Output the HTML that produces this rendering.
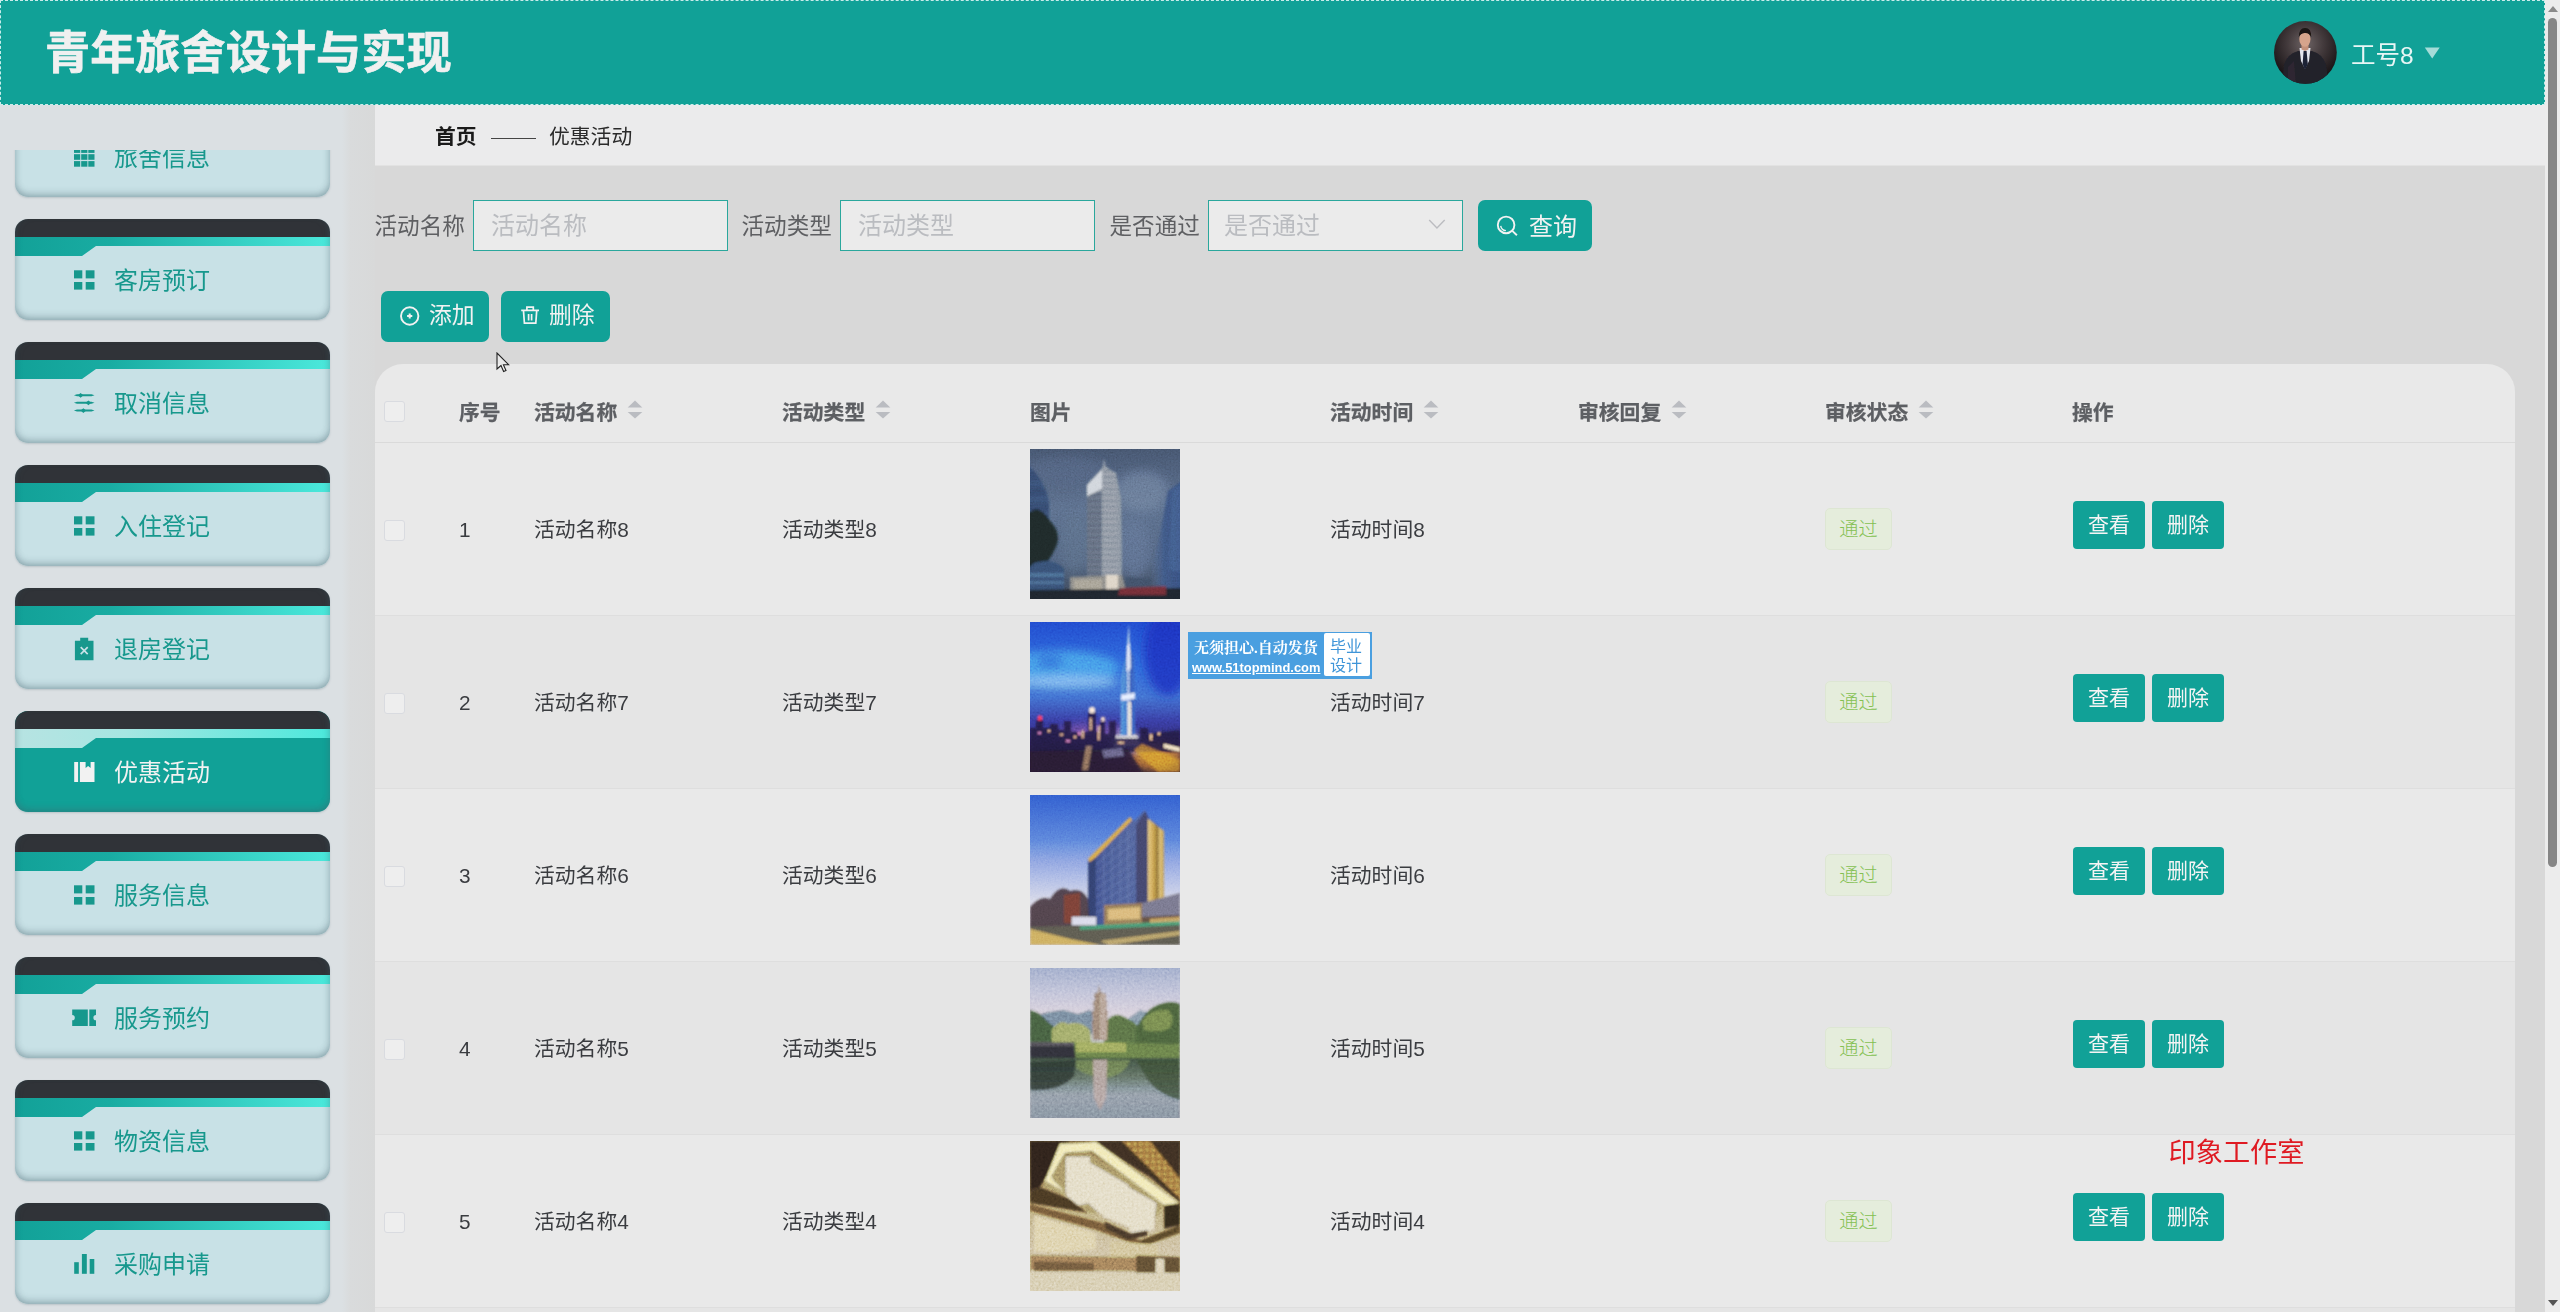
<!DOCTYPE html>
<html lang="zh-CN"><head><meta charset="utf-8"><title>青年旅舍设计与实现</title>
<style>
*{box-sizing:border-box;margin:0;padding:0}
html,body{width:2560px;height:1312px;overflow:hidden}
body{position:relative;background:#d8d8d8;font-family:"Liberation Sans","Noto Sans CJK SC",sans-serif;color:#333;-webkit-font-smoothing:antialiased}
.abs{position:absolute}
.t{position:absolute;white-space:nowrap;line-height:1}
#side{position:absolute;left:0;top:104px;width:375px;height:1208px;background:linear-gradient(90deg,#dbe0e3 0,#dbe0e3 342px,#d9dbdc 350px,#d8d9d9 375px)}
#menu{position:absolute;left:0;top:46px;width:345px;height:1162px;overflow:hidden}
.mi{position:absolute;left:15px;width:315px;height:101px;border-radius:13px;overflow:hidden;background:#c8e1e6;box-shadow:0 1px 2px rgba(120,140,150,.35)}
.mi svg.top{position:absolute;left:0;top:0}
.mi .sh{position:absolute;left:0;top:0;right:0;bottom:0;border-radius:13px;box-shadow:inset 0 -5px 7px -2px rgba(70,100,110,.38),inset 5px 0 7px -4px rgba(70,100,110,.22),inset -5px 0 7px -4px rgba(70,100,110,.22)}
.mi .lb{position:absolute;left:99px;top:49px;font-size:24px;line-height:26px;color:#17988d;white-space:nowrap;font-weight:400}
.mi svg.ic{position:absolute;left:57px;top:49px}
.mi.on{background:#11a197}
.mi.on .lb{color:#f2f2f2}
#head{position:absolute;left:0;top:0;width:2545px;height:105px;background:#11a197}
#head .bd{position:absolute;left:0;top:0;right:0;bottom:0;border:1px dashed rgba(235,250,250,.85)}
#title{left:45px;top:31px;font-size:45.200px;font-weight:700;color:#f0f0f0;letter-spacing:0;-webkit-text-stroke:0.700px #f0f0f0}
#crumb{position:absolute;left:375px;top:105px;width:2170px;height:60px;background:#ebebec;box-shadow:0 1px 0 #e2e2e2}
.inp{position:absolute;top:200px;width:255px;height:51px;border:1px solid #2aa79c;background:#ebebeb}
.ph{position:absolute;font-size:24px;color:#babcc0;white-space:nowrap;line-height:1}
.lab{font-size:22.600px;color:#5e5f62}
.btn{position:absolute;background:#11a197;color:#f2f2f2;border-radius:7px;white-space:nowrap}
#tbl{position:absolute;left:375px;top:364px;width:2140px;height:948px;background:#e9e9e9;border-radius:28px 28px 0 0;overflow:hidden}
.row{position:absolute;left:0;width:2140px;height:173px;border-bottom:1px solid #dedede}
.th{position:absolute;top:39px;font-size:20.8px;font-weight:700;color:#5d5f63;-webkit-text-stroke:0.250px #5d5f63;white-space:nowrap;line-height:1}
.td{position:absolute;top:77px;font-size:20.8px;color:#3a3c40;white-space:nowrap;line-height:1}
.cb{position:absolute;left:9px;width:21px;height:21px;border:1px solid #d9dbe0;border-radius:3px;background:#eeeeee}
.img{position:absolute;left:655px;top:6px;width:150px;height:150px;overflow:hidden}
.tag{position:absolute;left:1450px;top:65px;width:67px;height:42px;border:1px solid #dde6d3;border-radius:5px;background:#e5eddc;color:#84c052;font-weight:300;font-size:19.2px;line-height:41px;text-align:center}
.ab{position:absolute;top:58px;width:72px;height:48px;border-radius:4px;background:#11a197;color:#f4f4f4;font-size:21px;line-height:47px;text-align:center}
#sb{position:absolute;left:2545px;top:0;width:15px;height:1312px;background:#ececec}
</style></head><body>
<div id="side"><div id="menu">
<div class="mi" style="top:-54px"><svg class="top" width="315" height="38" viewBox="0 0 315 38"><defs><linearGradient id="goff0" x1="0" x2="1" y1="0" y2="0"><stop offset="0" stop-color="#12a198"/><stop offset=".3" stop-color="#19aca2"/><stop offset="1" stop-color="#4be9dc"/></linearGradient></defs><rect x="0" y="0" width="315" height="18.5" fill="#303338"/><polygon points="0,18 315,18 315,27 81,27 67,37 0,37" fill="url(#goff0)"/></svg><div class="sh"></div><svg class="ic" width="24" height="24" viewBox="0 0 24 24" fill="#17988d"><rect x="2.0" y="2.3" width="6.2" height="5.6"/><rect x="9.2" y="2.3" width="6.2" height="5.6"/><rect x="16.3" y="2.3" width="6.2" height="5.6"/><rect x="2.0" y="9.2" width="6.2" height="5.6"/><rect x="9.2" y="9.2" width="6.2" height="5.6"/><rect x="16.3" y="9.2" width="6.2" height="5.6"/><rect x="2.0" y="16.1" width="6.2" height="5.6"/><rect x="9.2" y="16.1" width="6.2" height="5.6"/><rect x="16.3" y="16.1" width="6.2" height="5.6"/></svg><div class="lb">旅舍信息</div></div>
<div class="mi" style="top:69px"><svg class="top" width="315" height="38" viewBox="0 0 315 38"><defs><linearGradient id="goff1" x1="0" x2="1" y1="0" y2="0"><stop offset="0" stop-color="#12a198"/><stop offset=".3" stop-color="#19aca2"/><stop offset="1" stop-color="#4be9dc"/></linearGradient></defs><rect x="0" y="0" width="315" height="18.5" fill="#303338"/><polygon points="0,18 315,18 315,27 81,27 67,37 0,37" fill="url(#goff1)"/></svg><div class="sh"></div><svg class="ic" width="24" height="24" viewBox="0 0 24 24" fill="#17988d"><rect x="2" y="2.3" width="8.3" height="8.1"/><rect x="13.7" y="2.3" width="8.8" height="8.1"/><rect x="2" y="14" width="8.3" height="7.6"/><rect x="13.7" y="14" width="8.8" height="7.6"/></svg><div class="lb">客房预订</div></div>
<div class="mi" style="top:192px"><svg class="top" width="315" height="38" viewBox="0 0 315 38"><defs><linearGradient id="goff2" x1="0" x2="1" y1="0" y2="0"><stop offset="0" stop-color="#12a198"/><stop offset=".3" stop-color="#19aca2"/><stop offset="1" stop-color="#4be9dc"/></linearGradient></defs><rect x="0" y="0" width="315" height="18.5" fill="#303338"/><polygon points="0,18 315,18 315,27 81,27 67,37 0,37" fill="url(#goff2)"/></svg><div class="sh"></div><svg class="ic" width="24" height="24" viewBox="0 0 24 24" fill="#17988d"><path d="M1.9 4.3 L5 3.3 H19.5 L22.5 4.3 L19.5 5.3 H5z"/><path d="M5.8 4.3 l2.8 -2.4 l2.8 2.4 l-2.8 2.400z"/><path d="M1.9 11.8 L5 10.8 H19.5 L22.5 11.8 L19.5 12.8 H5z"/><path d="M13.6 11.8 l2.8 -2.4 l2.8 2.4 l-2.8 2.400z"/><path d="M1.9 19.6 L5 18.6 H19.5 L22.5 19.6 L19.5 20.6 H5z"/><path d="M8.6 19.6 l2.8 -2.4 l2.8 2.4 l-2.8 2.400z"/></svg><div class="lb">取消信息</div></div>
<div class="mi" style="top:315px"><svg class="top" width="315" height="38" viewBox="0 0 315 38"><defs><linearGradient id="goff3" x1="0" x2="1" y1="0" y2="0"><stop offset="0" stop-color="#12a198"/><stop offset=".3" stop-color="#19aca2"/><stop offset="1" stop-color="#4be9dc"/></linearGradient></defs><rect x="0" y="0" width="315" height="18.5" fill="#303338"/><polygon points="0,18 315,18 315,27 81,27 67,37 0,37" fill="url(#goff3)"/></svg><div class="sh"></div><svg class="ic" width="24" height="24" viewBox="0 0 24 24" fill="#17988d"><rect x="2" y="2.3" width="8.3" height="8.1"/><rect x="13.7" y="2.3" width="8.8" height="8.1"/><rect x="2" y="14" width="8.3" height="7.6"/><rect x="13.7" y="14" width="8.8" height="7.6"/></svg><div class="lb">入住登记</div></div>
<div class="mi" style="top:438px"><svg class="top" width="315" height="38" viewBox="0 0 315 38"><defs><linearGradient id="goff4" x1="0" x2="1" y1="0" y2="0"><stop offset="0" stop-color="#12a198"/><stop offset=".3" stop-color="#19aca2"/><stop offset="1" stop-color="#4be9dc"/></linearGradient></defs><rect x="0" y="0" width="315" height="18.5" fill="#303338"/><polygon points="0,18 315,18 315,27 81,27 67,37 0,37" fill="url(#goff4)"/></svg><div class="sh"></div><svg class="ic" width="24" height="24" viewBox="0 0 24 24" fill="#17988d"><path d="M2.9 3.800h18.600v19.400h-18.600z M8.2 0.800h8v4h-8z"/><path d="M8.7 10.200l7 7M15.7 10.200l-7 7" stroke="#c8e1e6" stroke-width="1.7" fill="none"/></svg><div class="lb">退房登记</div></div>
<div class="mi on" style="top:561px"><svg class="top" width="315" height="38" viewBox="0 0 315 38"><defs><linearGradient id="gon5" x1="0" x2="1" y1="0" y2="0"><stop offset="0" stop-color="#b7e3e2"/><stop offset=".35" stop-color="#a6e6e2"/><stop offset="1" stop-color="#4be9dc"/></linearGradient></defs><rect x="0" y="0" width="315" height="18.5" fill="#303338"/><polygon points="0,18 315,18 315,27 81,27 67,37 0,37" fill="url(#gon5)"/></svg><div class="sh"></div><svg class="ic" width="24" height="24" viewBox="0 0 24 24" fill="#f2f2f2"><rect x="2.2" y="2" width="3.9" height="20"/><path d="M7.9 2H13.600V8L16.1 6.100L18.6 8V2H22.500V22H7.900z"/></svg><div class="lb">优惠活动</div></div>
<div class="mi" style="top:684px"><svg class="top" width="315" height="38" viewBox="0 0 315 38"><defs><linearGradient id="goff6" x1="0" x2="1" y1="0" y2="0"><stop offset="0" stop-color="#12a198"/><stop offset=".3" stop-color="#19aca2"/><stop offset="1" stop-color="#4be9dc"/></linearGradient></defs><rect x="0" y="0" width="315" height="18.5" fill="#303338"/><polygon points="0,18 315,18 315,27 81,27 67,37 0,37" fill="url(#goff6)"/></svg><div class="sh"></div><svg class="ic" width="24" height="24" viewBox="0 0 24 24" fill="#17988d"><rect x="2" y="2.3" width="8.3" height="8.1"/><rect x="13.7" y="2.3" width="8.8" height="8.1"/><rect x="2" y="14" width="8.3" height="7.6"/><rect x="13.7" y="14" width="8.8" height="7.6"/></svg><div class="lb">服务信息</div></div>
<div class="mi" style="top:807px"><svg class="top" width="315" height="38" viewBox="0 0 315 38"><defs><linearGradient id="goff7" x1="0" x2="1" y1="0" y2="0"><stop offset="0" stop-color="#12a198"/><stop offset=".3" stop-color="#19aca2"/><stop offset="1" stop-color="#4be9dc"/></linearGradient></defs><rect x="0" y="0" width="315" height="18.5" fill="#303338"/><polygon points="0,18 315,18 315,27 81,27 67,37 0,37" fill="url(#goff7)"/></svg><div class="sh"></div><svg class="ic" width="24" height="24" viewBox="0 0 24 24" fill="#17988d"><path fill-rule="evenodd" d="M0.2 3.400H24V9.100a2.6 2.6 0 0 0 0 5.200V20H0.200V14.300a2.6 2.6 0 0 0 0 -5.200z M15.8 3.400h1.500v16.600h-1.500z"/></svg><div class="lb">服务预约</div></div>
<div class="mi" style="top:930px"><svg class="top" width="315" height="38" viewBox="0 0 315 38"><defs><linearGradient id="goff8" x1="0" x2="1" y1="0" y2="0"><stop offset="0" stop-color="#12a198"/><stop offset=".3" stop-color="#19aca2"/><stop offset="1" stop-color="#4be9dc"/></linearGradient></defs><rect x="0" y="0" width="315" height="18.5" fill="#303338"/><polygon points="0,18 315,18 315,27 81,27 67,37 0,37" fill="url(#goff8)"/></svg><div class="sh"></div><svg class="ic" width="24" height="24" viewBox="0 0 24 24" fill="#17988d"><rect x="2" y="2.3" width="8.3" height="8.1"/><rect x="13.7" y="2.3" width="8.8" height="8.1"/><rect x="2" y="14" width="8.3" height="7.6"/><rect x="13.7" y="14" width="8.8" height="7.6"/></svg><div class="lb">物资信息</div></div>
<div class="mi" style="top:1053px"><svg class="top" width="315" height="38" viewBox="0 0 315 38"><defs><linearGradient id="goff9" x1="0" x2="1" y1="0" y2="0"><stop offset="0" stop-color="#12a198"/><stop offset=".3" stop-color="#19aca2"/><stop offset="1" stop-color="#4be9dc"/></linearGradient></defs><rect x="0" y="0" width="315" height="18.5" fill="#303338"/><polygon points="0,18 315,18 315,27 81,27 67,37 0,37" fill="url(#goff9)"/></svg><div class="sh"></div><svg class="ic" width="24" height="24" viewBox="0 0 24 24" fill="#17988d"><rect x="2.2" y="10.2" width="4.6" height="11.6"/><rect x="9.9" y="2" width="4.9" height="19.8"/><rect x="17.7" y="7" width="4.6" height="14.8"/></svg><div class="lb">采购申请</div></div>
</div></div>
<div id="crumb"><div class="t" style="left:60px;top:22px;font-size:20.8px;font-weight:700;color:#1a1a1a">首页</div>
<div class="abs" style="left:116px;top:32.500px;width:45px;height:1.500px;background:#444"></div>
<div class="t" style="left:174px;top:22px;font-size:20.8px;color:#2a2a2a">优惠活动</div></div>
<div id="head"><div class="bd"></div><div class="t" id="title">青年旅舍设计与实现</div>
<svg class="abs" style="left:2274px;top:21px" width="63" height="63" viewBox="0 0 63 63"><defs><radialGradient id="av" cx=".5" cy=".36" r=".62"><stop offset="0" stop-color="#6e6465"/><stop offset=".45" stop-color="#443b3d"/><stop offset="1" stop-color="#161113"/></radialGradient><clipPath id="avc"><circle cx="31.4" cy="31.4" r="31.4"/></clipPath><filter id="avb"><feGaussianBlur stdDeviation=".7"/></filter></defs><circle cx="31.4" cy="31.4" r="31.4" fill="url(#av)"/><g clip-path="url(#avc)" filter="url(#avb)"><path d="M8 64 L10 44 Q13 33 24 30 L38 30 Q49 33 52 44 L55 64z" fill="#22212a"/><path d="M25.5 27 L36.5 27 L35 40 L31 48 L27 40z" fill="#e4e6ee"/><path d="M29.6 30 L32.6 30 L33.8 43 L31 49 L28.6 43z" fill="#1c2036"/><path d="M27.5 23 L34.5 23 L34.5 28.5 L31 30 L27.5 28.500z" fill="#c4917a"/><ellipse cx="30.9" cy="18" rx="5.6" ry="7.8" fill="#d6a48c"/><path d="M24.8 16 Q25 7 31 7 Q37.4 7 37.2 16 Q35 11.5 30.5 12 Q26.5 12.5 24.8 16z" fill="#1a1412"/><path d="M14 46 L20 40 L22 64 L14 64z" fill="#3a3038" opacity=".5"/></g></svg>
<div class="t" style="left:2351px;top:43.500px;font-size:24.500px;color:#e8f6f5">工号8</div>
<svg class="abs" style="left:2423px;top:46px" width="18" height="14" viewBox="0 0 18 14"><polygon points="1.8,1.6 16.7,1.6 9.2,12.6" fill="#a5dcd8"/></svg>
</div>

<div class="t lab" style="left:374.500px;top:216px">活动名称</div>
<div class="inp" style="left:473px"><div class="ph" style="left:17px;top:12.500px">活动名称</div></div>
<div class="t lab" style="left:741.500px;top:216px">活动类型</div>
<div class="inp" style="left:840px"><div class="ph" style="left:17px;top:12.500px">活动类型</div></div>
<div class="t lab" style="left:1109.500px;top:216px">是否通过</div>
<div class="inp" style="left:1208px"><div class="ph" style="left:15px;top:12.500px">是否通过</div>
<svg class="abs" style="left:218px;top:18px" width="20" height="13" viewBox="0 0 20 13"><path d="M2.2 1L9.950 9L17.7 1" fill="none" stroke="#bbbcc0" stroke-width="1.4"/></svg></div>
<div class="btn" style="left:1478px;top:200px;width:114px;height:51px">
<svg class="abs" style="left:17px;top:13px" width="26" height="26" viewBox="0 0 26 26" fill="none" stroke="#f2f2f2" stroke-width="1.9"><circle cx="11.1" cy="11.9" r="8.3"/><path d="M17.3 17.900l4.6 4.3"/><path d="M5.7 12.800a5.8 5.8 0 0 0 5.2 4.8" stroke-width="1.4"/></svg>
<div class="t" style="left:51px;top:14.500px;font-size:24px">查询</div></div>

<div class="btn" style="left:381px;top:291px;width:108px;height:51px">
<svg class="abs" style="left:18px;top:13.500px" width="22" height="22" viewBox="0 0 22 22" fill="none" stroke="#f2f2f2" stroke-width="1.9"><circle cx="10.7" cy="11" r="8.7"/><path d="M10.7 8.400v5.200M8.1 11h5.2" stroke-width="2"/></svg>
<div class="t" style="left:48px;top:13px;font-size:22.800px">添加</div></div>
<div class="btn" style="left:501px;top:291px;width:109px;height:51px">
<svg class="abs" style="left:18px;top:12px" width="22" height="24" viewBox="0 0 22 24" fill="none" stroke="#f2f2f2" stroke-width="1.7"><path d="M2.2 7.400H20M7.9 7V4.200H14.300V7M4.5 7.900L5.4 20.100H16.800L17.7 7.900M9.6 11V17.400M12.6 11V17.4"/></svg>
<div class="t" style="left:48px;top:13px;font-size:22.800px">删除</div></div>

<div id="tbl">
<div class="row" style="top:0;height:79px;border-bottom:1px solid #dadada"><div class="cb" style="top:37px"></div><div class="th" style="left:84px">序号</div><div class="th" style="left:159px">活动名称</div><svg class="abs" style="left:252px;top:36px" width="16" height="20" viewBox="0 0 16 20" fill="#babcc1"><polygon points="8,0.5 15.3,7.5 0.7,7.5"/><polygon points="0.7,12 15.3,12 8,18.5"/></svg><div class="th" style="left:407px">活动类型</div><svg class="abs" style="left:500px;top:36px" width="16" height="20" viewBox="0 0 16 20" fill="#babcc1"><polygon points="8,0.5 15.3,7.5 0.7,7.5"/><polygon points="0.7,12 15.3,12 8,18.5"/></svg><div class="th" style="left:655px">图片</div><div class="th" style="left:955px">活动时间</div><svg class="abs" style="left:1048px;top:36px" width="16" height="20" viewBox="0 0 16 20" fill="#babcc1"><polygon points="8,0.5 15.3,7.5 0.7,7.5"/><polygon points="0.7,12 15.3,12 8,18.5"/></svg><div class="th" style="left:1203px">审核回复</div><svg class="abs" style="left:1296px;top:36px" width="16" height="20" viewBox="0 0 16 20" fill="#babcc1"><polygon points="8,0.5 15.3,7.5 0.7,7.5"/><polygon points="0.7,12 15.3,12 8,18.5"/></svg><div class="th" style="left:1450px">审核状态</div><svg class="abs" style="left:1543px;top:36px" width="16" height="20" viewBox="0 0 16 20" fill="#babcc1"><polygon points="8,0.5 15.3,7.5 0.7,7.5"/><polygon points="0.7,12 15.3,12 8,18.5"/></svg><div class="th" style="left:1697px">操作</div></div>
<div class="row" style="top:79px;background:#e9e9e9"><div class="cb" style="left:9px;top:77px"></div><div class="td" style="left:84px">1</div><div class="td" style="left:159px">活动名称8</div><div class="td" style="left:407px">活动类型8</div><div class="img"><svg width="150" height="150" viewBox="0 0 150 150" style="display:block"><defs><filter id="bl1" x="-10%" y="-10%" width="120%" height="120%"><feGaussianBlur stdDeviation="0.8"/></filter><filter id="bb1" x="-20%" y="-20%" width="140%" height="140%"><feGaussianBlur stdDeviation="5"/></filter><filter id="nz1" x="0" y="0" width="100%" height="100%"><feTurbulence type="fractalNoise" baseFrequency="0.6" numOctaves="2" seed="3"/><feColorMatrix type="matrix" values="0.33 0.33 0.33 0 0 0.33 0.33 0.33 0 0 0.33 0.33 0.33 0 0 0 0 0 0 0.35"/></filter><linearGradient id="s1" x1="0" y1="0" x2="0" y2="1"><stop offset="0" stop-color="#3f4d64"/><stop offset=".4" stop-color="#53647e"/><stop offset=".75" stop-color="#4a5a73"/><stop offset=".93" stop-color="#3a4658"/><stop offset="1" stop-color="#2a323e"/></linearGradient><linearGradient id="r1" x1="0" y1="0" x2="1" y2="0"><stop offset="0" stop-color="#4a5f80" stop-opacity=".2"/><stop offset=".4" stop-color="#3a5078"/><stop offset="1" stop-color="#314872"/></linearGradient><pattern id="p1" width="4" height="2.4" patternUnits="userSpaceOnUse"><rect width="4" height="1" fill="#bcc3cc"/><rect y="1" width="4" height="1.4" fill="#5f6878"/></pattern><pattern id="q1" width="4" height="2.4" patternUnits="userSpaceOnUse"><rect width="4" height="0.9" fill="#7d8695"/><rect y="0.9" width="4" height="1.5" fill="#465060"/></pattern><pattern id="l1" width="4" height="3.2" patternUnits="userSpaceOnUse"><rect width="4" height="1.1" fill="#4a6894"/><rect y="1.1" width="4" height="2.1" fill="#223250"/></pattern></defs><rect width="150" height="150" fill="url(#s1)"/><g filter="url(#bb1)"><ellipse cx="112" cy="42" rx="26" ry="20" fill="#697b96" opacity=".6"/><ellipse cx="35" cy="22" rx="40" ry="14" fill="#4d5c76" opacity=".7"/><ellipse cx="104" cy="100" rx="16" ry="30" fill="#5b6d8a" opacity=".6"/><ellipse cx="45" cy="95" rx="14" ry="30" fill="#56677f" opacity=".5"/></g><g filter="url(#bl1)"><path d="M-2 16 Q14 30 19 52 L19 152 L-2 152z" fill="url(#l1)"/><path d="M152 32 L138 42 L130 84 L122 118 L122 142 L152 142z" fill="url(#r1)"/><path d="M152 34 L142 42 L138 120 L152 124z" fill="#405a86" opacity=".6"/><path d="M-2 64 Q10 54 20 72 Q32 84 26 98 Q20 112 8 122 L-2 126z" fill="#1a2628"/><path d="M4 114 Q24 108 34 120 L34 146 L-2 146 L-2 120z" fill="#31496a"/><path d="M-2 124 L34 124 L34 128 L-2 128z M-2 132 L34 132 L34 135 L-2 135z" fill="#5a7ea0" opacity=".5"/><path d="M72 20 L74 10 L76 18 L86 24 L91 50 L92 128 L72 128z" fill="url(#p1)"/><path d="M57 36 L72 20 L72 128 L57 128z" fill="url(#q1)"/><path d="M57 36 L72 20 L72 40 L57 47z" fill="#dfe4ea" opacity=".85"/><path d="M86 24 L91 50 L92 128 L88 128z" fill="#7d8796" opacity=".7"/><path d="M40 128 L92 126 L96 142 L40 143z" fill="#7f7e7a"/><path d="M76 126 L88 126 L88 142 L76 142z" fill="#d9cfc0"/><path d="M44 131 L72 130 L72 140 L44 141z" fill="#a9a290" opacity=".7"/><path d="M96 128 L122 130 L122 140 L96 140z" fill="#3a485e"/><path d="M-2 141 L152 139 L152 152 L-2 152z" fill="#1e242b"/><path d="M90 139 L136 137 L136 146 L88 146z" fill="#702a34" opacity=".9"/></g><rect width="150" height="150" filter="url(#nz1)" style="mix-blend-mode:overlay"/></svg></div><div class="td" style="left:955px">活动时间8</div><div class="tag">通过</div><div class="ab" style="left:1698px">查看</div><div class="ab" style="left:1777px">删除</div></div>
<div class="row" style="top:252px;background:#e5e5e5"><div class="cb" style="left:9px;top:77px"></div><div class="td" style="left:84px">2</div><div class="td" style="left:159px">活动名称7</div><div class="td" style="left:407px">活动类型7</div><div class="img"><svg width="150" height="150" viewBox="0 0 150 150" style="display:block"><defs><filter id="bl2" x="-10%" y="-10%" width="120%" height="120%"><feGaussianBlur stdDeviation="0.8"/></filter><filter id="bb2" x="-20%" y="-20%" width="140%" height="140%"><feGaussianBlur stdDeviation="5"/></filter><filter id="nz2" x="0" y="0" width="100%" height="100%"><feTurbulence type="fractalNoise" baseFrequency="0.5" numOctaves="2" seed="4"/><feColorMatrix type="matrix" values="0.33 0.33 0.33 0 0 0.33 0.33 0.33 0 0 0.33 0.33 0.33 0 0 0 0 0 0 0.5"/></filter><linearGradient id="s2" x1="0" y1="0" x2="0" y2="1"><stop offset="0" stop-color="#1c40c4"/><stop offset=".3" stop-color="#2a5cd4"/><stop offset=".5" stop-color="#3860c6"/><stop offset=".66" stop-color="#30348e"/><stop offset=".8" stop-color="#2a2456"/><stop offset="1" stop-color="#221a2c"/></linearGradient><linearGradient id="t2" x1="0" y1="0" x2="1" y2="0"><stop offset="0" stop-color="#4f86d6"/><stop offset=".42" stop-color="#3663c0"/><stop offset=".52" stop-color="#b9d2f6"/><stop offset=".64" stop-color="#2a49a8"/><stop offset="1" stop-color="#3760bc"/></linearGradient></defs><rect width="150" height="150" fill="url(#s2)"/><g filter="url(#bb2)"><ellipse cx="30" cy="46" rx="58" ry="17" fill="#3f8ce6" opacity=".9"/><ellipse cx="36" cy="60" rx="52" ry="6" fill="#86bbf0" opacity=".75"/><ellipse cx="20" cy="40" rx="14" ry="8" fill="#2a5fd0" opacity=".8"/><ellipse cx="138" cy="30" rx="24" ry="44" fill="#1a2cb0" opacity=".85"/><ellipse cx="126" cy="134" rx="26" ry="14" fill="#c87c2a" opacity=".8"/><ellipse cx="64" cy="110" rx="36" ry="8" fill="#8a58a8" opacity=".55"/><ellipse cx="28" cy="138" rx="46" ry="14" fill="#1b1624" opacity=".9"/><ellipse cx="96" cy="120" rx="14" ry="8" fill="#c8d0ee" opacity=".7"/></g><g filter="url(#bl2)"><path d="M99 2 L100.4 26 L104 36 L105.5 124 L90.5 124 L91 56 L96 30z" fill="url(#t2)"/><path d="M97 24 L99.8 21 L100.6 46 L97 50z" fill="#e4eeff" opacity=".9"/><path d="M91 73 L105 71 L105 76.5 L91 78.500z" fill="#dfeaff"/><path d="M98.3 80 L100.8 80 L101 122 L98 122z" fill="#f2ead2"/><path d="M86 114 L107 113 L109 123 L84 125z" fill="#cfcbd0"/><path d="M0 106 L6 106 L6 98 L13 98 L13 106 L20 106 L20 102 L28 102 L28 108 L34 108 L34 99 L41 99 L41 110 L58 110 L58 90 L66 90 L66 110 L70 110 L70 99 L75 99 L75 112 L79 112 L79 99 L86 99 L86 116 L110 116 L110 106 L118 106 L118 112 L150 108 L150 130 L0 130z" fill="#1e1b3c" opacity=".9"/><circle cx="10" cy="96" r="2.4" fill="#ff3858"/><circle cx="62" cy="88" r="3" fill="#ffe6d0"/><circle cx="73" cy="97" r="2" fill="#ffd9c0"/><g fill="#ffc890" opacity=".9"><rect x="18" y="108" width="2" height="2"/><rect x="30" y="112" width="3" height="1.5"/><rect x="44" y="114" width="2" height="2"/><rect x="52" y="108" width="1.5" height="8"/><rect x="60" y="96" width="1.5" height="12"/><rect x="68" y="104" width="1.5" height="14"/><rect x="88" y="120" width="6" height="1.5"/><rect x="120" y="112" width="2" height="6"/><rect x="128" y="110" width="2" height="3"/></g><g fill="#ff9ad0" opacity=".7"><rect x="48" y="110" width="3" height="3"/><rect x="36" y="118" width="4" height="2"/><rect x="8" y="110" width="3" height="2"/></g><path d="M112 122 L150 138 L150 150 L128 150 L104 128z" fill="#dc922a" opacity=".6"/><path d="M134 122 L150 126 L150 129.5 L134 125.500z" fill="#ffe9c0"/><path d="M0 129 L98 127 L112 150 L0 150z" fill="#221a2c" opacity=".88"/><path d="M56 124 L62 124 L58 148 L52 148z" fill="#c8a070" opacity=".55"/><path d="M72 128 L92 126 L94 134 L74 136z" fill="#8a88b0" opacity=".55"/></g><rect width="150" height="150" filter="url(#nz2)" style="mix-blend-mode:overlay"/></svg></div><div class="td" style="left:955px">活动时间7</div><div class="tag">通过</div><div class="ab" style="left:1698px">查看</div><div class="ab" style="left:1777px">删除</div></div>
<div class="row" style="top:425px;background:#e9e9e9"><div class="cb" style="left:9px;top:77px"></div><div class="td" style="left:84px">3</div><div class="td" style="left:159px">活动名称6</div><div class="td" style="left:407px">活动类型6</div><div class="img"><svg width="150" height="150" viewBox="0 0 150 150" style="display:block"><defs><filter id="bl3" x="-10%" y="-10%" width="120%" height="120%"><feGaussianBlur stdDeviation="0.8"/></filter><filter id="bb3" x="-20%" y="-20%" width="140%" height="140%"><feGaussianBlur stdDeviation="5"/></filter><filter id="nz3" x="0" y="0" width="100%" height="100%"><feTurbulence type="fractalNoise" baseFrequency="0.6" numOctaves="2" seed="5"/><feColorMatrix type="matrix" values="0.33 0.33 0.33 0 0 0.33 0.33 0.33 0 0 0.33 0.33 0.33 0 0 0 0 0 0 0.35"/></filter><linearGradient id="s3" x1="0" y1="0" x2="0" y2="1"><stop offset="0" stop-color="#2d55c9"/><stop offset=".3" stop-color="#5377d6"/><stop offset=".55" stop-color="#a3b2e2"/><stop offset=".72" stop-color="#d6d7e6"/><stop offset="1" stop-color="#c8c2c8"/></linearGradient><linearGradient id="g3" x1="0" y1="0" x2="1" y2="0"><stop offset="0" stop-color="#e2c27a"/><stop offset=".35" stop-color="#c19545"/><stop offset=".6" stop-color="#7d6130"/><stop offset=".75" stop-color="#e0bd70"/><stop offset="1" stop-color="#b08a40"/></linearGradient><linearGradient id="f3" x1="0" y1="0" x2="1" y2="0"><stop offset="0" stop-color="#3b4a80"/><stop offset=".6" stop-color="#4c5d92"/><stop offset="1" stop-color="#3a4472"/></linearGradient></defs><rect width="150" height="150" fill="url(#s3)"/><g filter="url(#bl3)"><path d="M58 64 L100 22 L104 26 L115 15 L118 22 L134 36 L134 104 L150 98 L150 150 L58 150z" fill="url(#f3)"/><path d="M58 64 L100 22 L102 25 L60 68z" fill="#d9a23c"/><path d="M58 68 L66 62 L66 122 L58 122z" fill="#2f3a66"/><path d="M106 30 L115 16 L118 22 L118 112 L106 112z" fill="#3c3f63"/><path d="M118 24 L134 36 L134 104 L118 110z" fill="url(#g3)"/><g stroke="#7c8cc0" stroke-width=".8" opacity=".55"><path d="M66 70 L106 36M66 78 L106 46M66 86 L106 56M66 94 L106 66M66 102 L106 76M66 110 L106 86M66 118 L106 96M74 56 L74 122M82 48 L82 122M90 40 L90 122M98 32 L98 122"/></g><path d="M112 108 L150 98 L150 134 L112 134z" fill="#6d6c80"/><path d="M112 122 L150 120 L150 134 L112 134z" fill="#5a4a3c"/><path d="M120 124 L150 122 L150 131 L120 132z" fill="#d9aa62" opacity=".8"/><path d="M74 110 L112 108 L112 134 L74 134z" fill="#8a7050"/><path d="M78 114 L110 112 L110 124 L78 125z" fill="#e3bc74" opacity=".85"/><path d="M0 112 Q10 100 20 104 Q30 88 40 96 Q52 92 58 104 L60 134 L0 136z" fill="#3a2f33" opacity=".9"/><path d="M34 100 L50 98 L50 128 L34 128z" fill="#7a3a30" opacity=".8"/><path d="M0 132 L150 128 L150 150 L0 150z" fill="#55524a"/><path d="M42 122 L66 122 L66 130 L42 130z" fill="#d5d7e8"/><path d="M50 131 L150 126 L150 130 L50 135z" fill="#3c9c74" opacity=".8"/><path d="M0 134 L40 144 L70 150 L0 150z" fill="#c7a558"/><path d="M70 146 L150 136 L150 140 L80 150z" fill="#c9ab68" opacity=".8"/></g><rect width="150" height="150" filter="url(#nz3)" style="mix-blend-mode:overlay"/></svg></div><div class="td" style="left:955px">活动时间6</div><div class="tag">通过</div><div class="ab" style="left:1698px">查看</div><div class="ab" style="left:1777px">删除</div></div>
<div class="row" style="top:598px;background:#e5e5e5"><div class="cb" style="left:9px;top:77px"></div><div class="td" style="left:84px">4</div><div class="td" style="left:159px">活动名称5</div><div class="td" style="left:407px">活动类型5</div><div class="img"><svg width="150" height="150" viewBox="0 0 150 150" style="display:block"><defs><filter id="bl4" x="-10%" y="-10%" width="120%" height="120%"><feGaussianBlur stdDeviation="0.9"/></filter><filter id="bb4" x="-20%" y="-20%" width="140%" height="140%"><feGaussianBlur stdDeviation="5"/></filter><filter id="nz4" x="0" y="0" width="100%" height="100%"><feTurbulence type="fractalNoise" baseFrequency="0.4" numOctaves="2" seed="6"/><feColorMatrix type="matrix" values="0.33 0.33 0.33 0 0 0.33 0.33 0.33 0 0 0.33 0.33 0.33 0 0 0 0 0 0 0.5"/></filter><linearGradient id="s4" x1="0" y1="0" x2="0" y2="1"><stop offset="0" stop-color="#8d9bc0"/><stop offset=".16" stop-color="#b3b6d0"/><stop offset=".3" stop-color="#cfc6d4"/><stop offset=".45" stop-color="#b9bcc0"/><stop offset="1" stop-color="#b9bcc0"/></linearGradient><linearGradient id="w4" x1="0" y1="0" x2="0" y2="1"><stop offset="0" stop-color="#37463a"/><stop offset=".3" stop-color="#566458"/><stop offset=".6" stop-color="#7f8a98"/><stop offset="1" stop-color="#737c8c"/></linearGradient></defs><rect width="150" height="150" fill="url(#s4)"/><g filter="url(#bl4)"><path d="M0 50 L18 44 L34 42 L48 46 L60 42 L64 44 L64 66 L0 66z" fill="#68788c"/><path d="M94 54 L110 42 L124 46 L134 42 L150 48 L150 66 L94 66z" fill="#74869a"/><path d="M0 42 Q10 44 18 54 Q28 60 30 70 L30 84 L0 84z" fill="#3d5238"/><path d="M22 62 Q30 50 38 56 Q50 52 60 62 L62 80 L22 82z" fill="#8f9a5c"/><path d="M74 56 Q84 42 96 50 Q108 54 112 66 L112 82 L74 82z" fill="#50643c"/><path d="M106 60 Q116 40 130 36 Q142 32 150 36 L150 84 L106 84z" fill="#435636"/><path d="M112 52 Q124 40 138 42 Q146 50 140 60 Q128 66 114 62z" fill="#76884c" opacity=".7"/><path d="M69 16 L70.5 24 L76 26 L75 32 L77 34 L76 42 L78 44 L77 52 L78 54 L77 72 L63 72 L62 54 L63 52 L62 44 L64 42 L63 34 L65 32 L64 26 L68 24z" fill="#8a7468"/><path d="M70 26 L76 26 L77 72 L70 72z" fill="#b39c8c" opacity=".7"/><path d="M40 74 L150 76 L150 90 L40 90z" fill="#5c7040"/><path d="M46 74 L96 75 L96 84 L46 84z" fill="#9aa556" opacity=".8"/><path d="M0 74 L44 74 L46 94 L0 96z" fill="#2a2b30"/><path d="M0 74 L44 74 L44 78 L0 78z" fill="#4c4a50"/><rect x="0" y="90" width="150" height="62" fill="url(#w4)"/><path d="M0 94 L46 92 L44 108 Q30 124 0 122z" fill="#27302c" opacity=".85"/><path d="M106 92 L150 92 L150 132 Q130 128 118 112z" fill="#34442f" opacity=".8"/><path d="M46 92 L100 92 Q96 106 76 110 Q56 108 46 100z" fill="#6f7f4c" opacity=".65"/><path d="M63 92 L77 92 L76 130 L70 142 L64 130z" fill="#a8938f" opacity=".9"/></g><rect width="150" height="150" filter="url(#nz4)" style="mix-blend-mode:overlay"/></svg></div><div class="td" style="left:955px">活动时间5</div><div class="tag">通过</div><div class="ab" style="left:1698px">查看</div><div class="ab" style="left:1777px">删除</div></div>
<div class="row" style="top:771px;background:#e9e9e9"><div class="cb" style="left:9px;top:77px"></div><div class="td" style="left:84px">5</div><div class="td" style="left:159px">活动名称4</div><div class="td" style="left:407px">活动类型4</div><div class="img"><svg width="150" height="150" viewBox="0 0 150 150" style="display:block"><defs><filter id="bl5" x="-10%" y="-10%" width="120%" height="120%"><feGaussianBlur stdDeviation="0.9"/></filter><filter id="bb5" x="-20%" y="-20%" width="140%" height="140%"><feGaussianBlur stdDeviation="5"/></filter><filter id="nz5" x="0" y="0" width="100%" height="100%"><feTurbulence type="fractalNoise" baseFrequency="0.45" numOctaves="2" seed="7"/><feColorMatrix type="matrix" values="0.33 0.33 0.33 0 0 0.33 0.33 0.33 0 0 0.33 0.33 0.33 0 0 0 0 0 0 0.7"/></filter><linearGradient id="s5" x1="0" y1="0" x2="0" y2="1"><stop offset="0" stop-color="#5b4a30"/><stop offset=".4" stop-color="#a38e64"/><stop offset=".7" stop-color="#bcaa80"/><stop offset="1" stop-color="#c8ba94"/></linearGradient><pattern id="p5" width="2.6" height="8" patternUnits="userSpaceOnUse"><rect width="2.6" height="8" fill="#efe8d0"/><rect x="1.6" width="1" height="8" fill="#b5a67c"/></pattern><pattern id="q5" width="6" height="6" patternUnits="userSpaceOnUse"><rect width="6" height="6" fill="#7a5c30"/><circle cx="3" cy="3" r="1.8" fill="#b08a48"/></pattern></defs><rect width="150" height="150" fill="url(#s5)"/><g filter="url(#bl5)"><path d="M0 0 L40 0 L10 46 L0 50z" fill="#251c14"/><path d="M62 0 L150 0 L150 62 L120 36z" fill="#33281a"/><path d="M92 0 L120 0 L150 38 L150 58z" fill="url(#q5)"/><path d="M30 3 L66 1 L148 62 L140 68 L62 10 L35 12 L21 36 L46 49 L41 54 L15 40z" fill="#ece29e"/><path d="M36 14 L60 12 L134 64 L120 84 L96 86 L80 70 L60 72 L40 56 L22 38z" fill="#8a7852"/><path d="M36 16 L60 16 L60 62 L48 64 L36 54z" fill="url(#p5)"/><path d="M60 22 L98 44 L98 86 L74 76 L60 64z" fill="url(#p5)"/><path d="M98 46 L126 62 L124 88 L104 96 L98 86z" fill="url(#p5)"/><path d="M0 50 L10 46 L40 58 L58 72 L0 62z" fill="#3a2d1e"/><path d="M0 63 L70 81 L112 100 L109 105 L66 89 L0 70z" fill="#5e4a2e"/><path d="M108 100 L150 84 L150 92 L112 106z" fill="#4a3a24"/><path d="M134 64 L150 62 L150 84 L134 88z" fill="#2b2118"/><path d="M74 80 L100 92 L118 89 L117 95 L98 99 L76 88z" fill="#3a2e20"/><path d="M4 74 L66 92 L66 108 L30 112 L4 110z" fill="#d2c290"/><path d="M80 100 L128 104 L128 118 L80 116z" fill="#c2b07c"/><path d="M0 114 L150 117 L150 131 L0 129z" fill="#83694a"/><path d="M4 120 L64 122 L64 130 L4 130z" fill="#5c4832"/><path d="M106 114 L150 116 L150 132 L106 132z" fill="#4f3f2c"/><path d="M126 118 L134 118 L134 132 L126 132z" fill="#d2c4a0"/><path d="M0 132 L150 132 L150 150 L0 150z" fill="#c9bc96"/></g><rect width="150" height="150" filter="url(#nz5)" style="mix-blend-mode:overlay"/></svg></div><div class="td" style="left:955px">活动时间4</div><div class="tag">通过</div><div class="ab" style="left:1698px">查看</div><div class="ab" style="left:1777px">删除</div></div>
<div class="row" style="top:944px;height:10px;border:0;background:#e5e5e5"></div>
</div>

<div class="abs" style="left:1188px;top:632px;width:184px;height:47px;background:#4a9fe0">
<div class="t" style="left:6px;top:9px;font-size:15px;font-weight:700;color:#fff;font-family:'Liberation Serif','Noto Serif CJK SC',serif">无须担心.自动发货</div>
<div class="t" style="left:4px;top:30px;font-size:12.900px;font-weight:700;color:#fff;text-decoration:underline">www.51topmind.com</div>
<div class="abs" style="left:136px;top:1px;width:46px;height:43px;background:#fff;border-radius:2px"></div>
<div class="t" style="left:142px;top:6.500px;font-size:16px;color:#3f95d8">毕业</div>
<div class="t" style="left:142px;top:26px;font-size:16px;color:#3f95d8">设计</div>
</div>
<div class="t" style="left:2168.500px;top:1138.500px;font-size:27.200px;color:#df1a22">印象工作室</div>

<svg class="abs" style="left:496px;top:352px" width="16" height="22" viewBox="0 0 16 22"><path d="M1 1v16l4-3.5 2.6 6 2.4-1-2.6-5.800h5.200z" fill="rgba(255,255,255,.45)" stroke="#222" stroke-width="1.1"/></svg>

<div id="sb">
<svg class="abs" style="left:3px;top:6px" width="10" height="6" viewBox="0 0 10 6"><polygon points="5,0 10,6 0,6" fill="#8a8a8a"/></svg>
<div class="abs" style="left:3px;top:18px;width:9px;height:849px;border-radius:5px;background:#868686"></div>
<svg class="abs" style="left:3px;top:1300px" width="10" height="6" viewBox="0 0 10 6"><polygon points="0,0 10,0 5,6" fill="#555"/></svg>
</div>
</body></html>
